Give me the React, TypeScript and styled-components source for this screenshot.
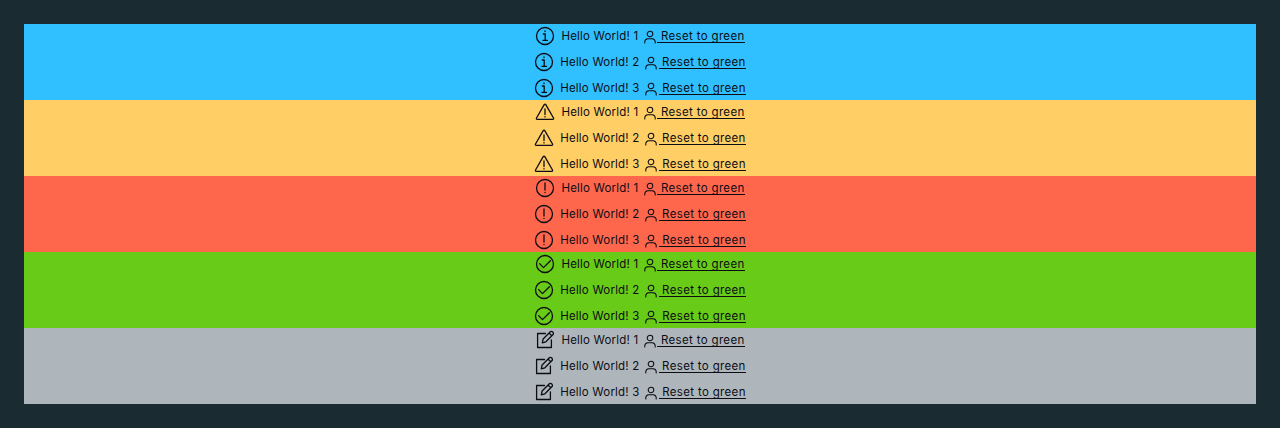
import React from "react";
import styled, { createGlobalStyle } from "styled-components";

const GlobalStyle = createGlobalStyle`
  * { box-sizing: border-box; }
  body { margin: 0; background: #1b2b32; font-family: Inter, "Liberation Sans", sans-serif; }
`;

const Page = styled.main`
  padding: 24px;
  height: 428px;
`;

const Banner = styled.section<{ $color: string }>`
  display: grid;
  grid-template-rows: repeat(3, 24px);
  row-gap: 2px;
  height: 76px;
  background: ${(p) => p.$color};
  color: #0c0c14;
`;

const Row = styled.div`
  display: flex;
  align-items: center;
  justify-content: center;
  font-size: 11.5px;
  line-height: 24px;
  white-space: pre;
`;

const StatusIcon = styled.svg`
  width: 20px;
  height: 20px;
  margin-right: 6px;
  flex: none;
  fill: none;
  stroke: currentColor;
  stroke-width: 1.3;
  stroke-linecap: round;
  stroke-linejoin: round;
`;

const Message = styled.span`
  letter-spacing: 0.2px;
`;

const UserIcon = styled.svg`
  width: 14px;
  height: 14px;
  margin: 1px 0.5px 0 4.5px;
  flex: none;
  fill: none;
  stroke: currentColor;
  stroke-width: 1.05;
  stroke-linecap: round;
`;

const ResetLink = styled.a`
  color: inherit;
  cursor: pointer;
  letter-spacing: 0.34px;
  line-height: 14px;
  height: 14px;
  border-bottom: 1px solid currentColor;
`;

type Kind = "info" | "warning" | "error" | "success" | "note";

const drawings: Record<Kind, React.ReactNode> = {
  info: (
    <>
      <circle cx="10" cy="10" r="8.5" />
      <path d="M8.3 8h1.9v6.2M8 14.4h4.4M10 5v.5" />
    </>
  ),
  warning: (
    <>
      <path d="M9.2 2.7 1.5 16q-.5 1.3.8 1.4h15.4q1.3-.1.8-1.4L10.8 2.7q-.8-1.2-1.6 0Z" />
      <path d="M10 6.8v5.7M10 14.6v.3" />
    </>
  ),
  error: (
    <>
      <circle cx="10" cy="10" r="8.5" />
      <path d="M10 5v7M10 14.3v.3" />
    </>
  ),
  success: (
    <>
      <circle cx="10" cy="10" r="8.5" />
      <path d="m4.6 9.6 3.9 4 6.9-6.8" />
    </>
  ),
  note: (
    <>
      <path d="M10.5 3.500H2.600v14h13.800v-7.500" />
      <path d="m7.300 12.800.800-3.800 7.500-7.500q1.200-.5 2.200.5t.5 2.200L10.900 11.800ZM14.200 3.200l2.600 2.600" />
    </>
  ),
};

const banners: { kind: Kind; color: string }[] = [
  { kind: "info", color: "#30c0ff" },
  { kind: "warning", color: "#ffce65" },
  { kind: "error", color: "#ff674d" },
  { kind: "success", color: "#67cb17" },
  { kind: "note", color: "#aeb6bc" },
];

export default function App() {
  return (
    <Page>
      <GlobalStyle />
      {banners.map(({ kind, color }) => (
        <Banner key={kind} $color={color}>
          {[1, 2, 3].map((n) => (
            <Row key={n}>
              <StatusIcon viewBox="0 0 20 20">{drawings[kind]}</StatusIcon>
              <Message>Hello World! {n}</Message>
              <UserIcon viewBox="0 0 14 14">
                <circle cx="7" cy="4" r="2.8" />
                <path d="M1.8 13v-1.500q.2-2.500 3-2.700h4.400q2.800.2 3 2.700V13" />
              </UserIcon>
              <ResetLink> Reset to green</ResetLink>
            </Row>
          ))}
        </Banner>
      ))}
    </Page>
  );
}
